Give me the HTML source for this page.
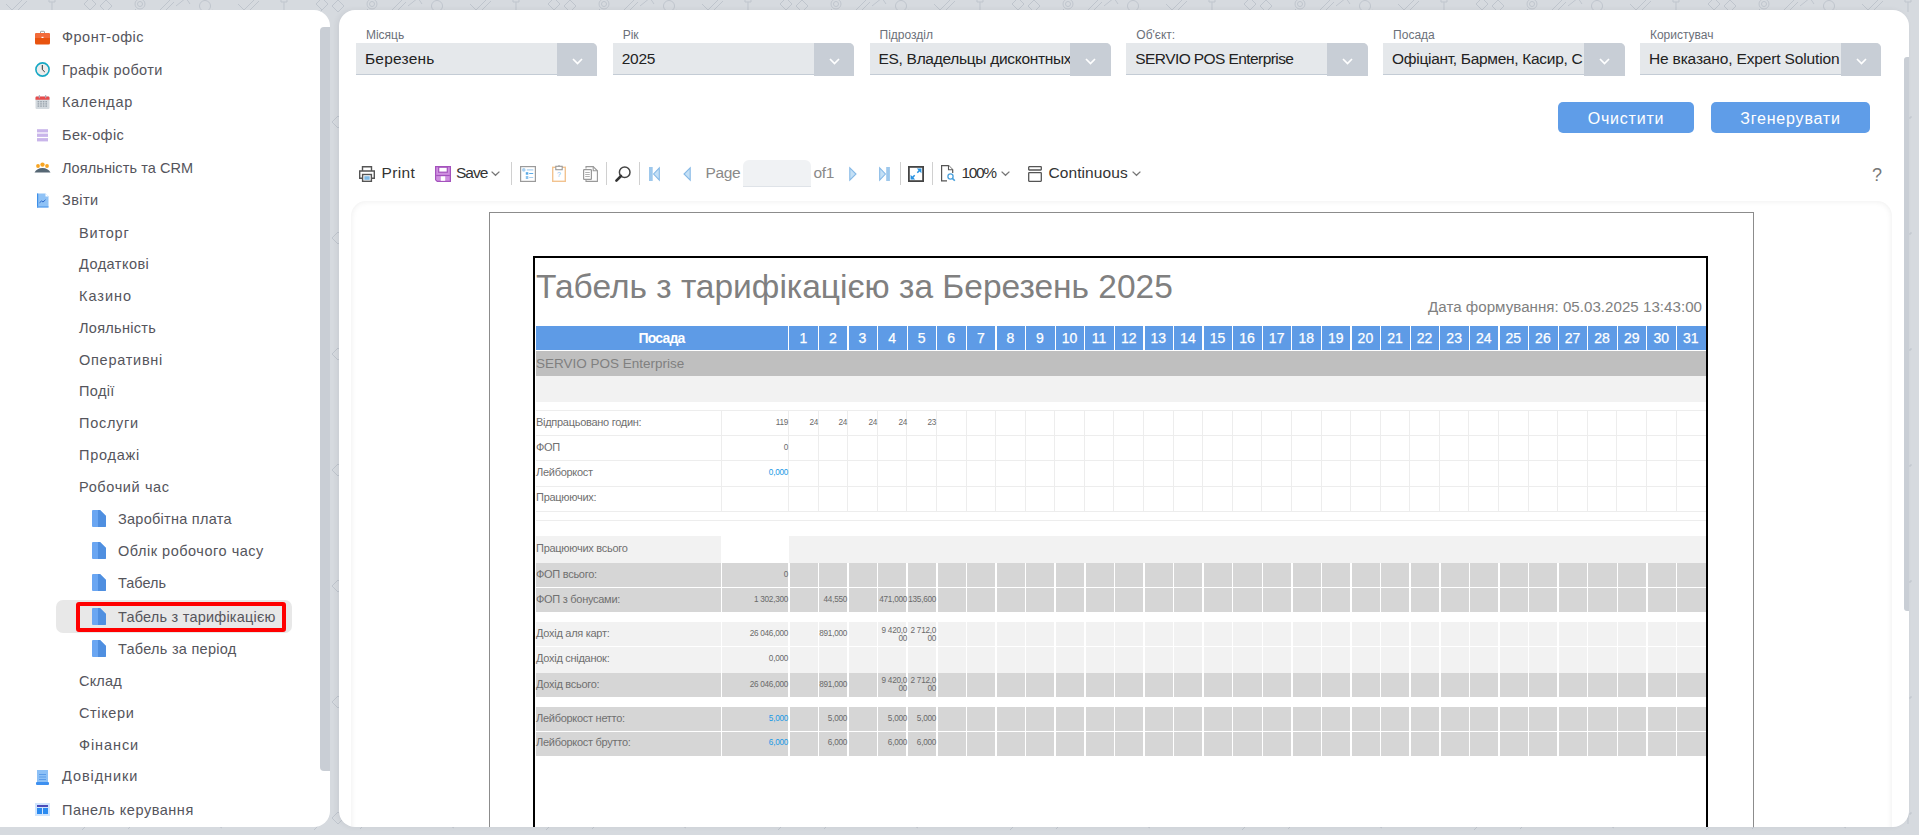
<!DOCTYPE html><html><head><meta charset="utf-8"><style>

*{box-sizing:border-box;margin:0;padding:0}
html,body{width:1919px;height:835px;overflow:hidden}
body{background:#d6dadf;font-family:"Liberation Sans",sans-serif;position:relative;color:#333}
.abs{position:absolute}
svg{position:absolute;overflow:visible}
#side{position:absolute;left:0;top:10px;width:330px;height:817px;background:#fff;border-radius:0 16px 16px 0}
#sbar{position:absolute;left:320px;top:27px;width:10px;height:744px;background:#c9ced5;border-radius:4px 0 0 4px}
.mi{position:absolute;white-space:nowrap;font-size:14.5px;letter-spacing:0.45px;line-height:20px;color:#55555c}
#main{position:absolute;left:339px;top:10px;width:1570px;height:817px;background:#fff;border-radius:16px;box-shadow:-2px 0 5px rgba(60,70,80,0.08)}
#mbar{position:absolute;left:1904px;top:57px;width:5px;height:554px;background:#c9ced5;border-radius:3px 0 0 3px}
.lbl{position:absolute;font-size:12px;color:#6b7079;line-height:14px;white-space:nowrap}
.dd{position:absolute;top:43px;width:241.5px;height:32px;background:#e5e8eb;border-bottom:1px solid #c4ccd5;border-radius:0 5px 0 0}
.dd .v{position:absolute;left:9px;top:6.3px;font-size:15.5px;line-height:20px;color:#222;white-space:nowrap;overflow:hidden}
.dd .ar{position:absolute;right:0;top:0;width:40.7px;height:32.7px;background:#c8ced6;border-radius:0 5px 0 0}
.btn{position:absolute;top:102px;height:31px;background:#5f9de8;border-radius:5px;color:#fff;font-size:16px;line-height:33px;text-align:center;letter-spacing:0.8px}
.tb{position:absolute;font-size:15.5px;line-height:20px;color:#333;white-space:nowrap}
.sep{position:absolute;top:162px;width:1px;height:23px;background:#d0d0d0}

</style></head><body>
<svg style="left:0;top:0" width="1919" height="835"><defs><pattern id="dd" x="0" y="0" width="232" height="116" patternUnits="userSpaceOnUse"><g fill="none" stroke="#bfc5cd" stroke-width="1"><path d="M14 8L24 -2M17 11L27 1M10 12L14 8M6 4L12 10"/><path d="M52 12V2M49 -1A3 3 0 0 1 55 -1L55 2H49Z"/><path d="M84 4L90 -2L96 4L90 10ZM90 10L82 18M100 6L106 0L112 6L106 12Z"/><circle cx="140" cy="4" r="5"/><circle cx="140" cy="4" r="2.5"/><path d="M136 9L128 17"/><path d="M160 10L170 0M164 12L174 2M176 6L186 -2L190 4"/><circle cx="205" cy="6" r="5.5"/><path d="M212 10L222 16"/><path d="M30 62L40 52M34 66L44 56M26 70L30 66"/><circle cx="80" cy="62" r="5"/><path d="M118 56L124 50L130 56L124 62Z M150 66V56"/><path d="M190 60L204 60M196 54L204 68"/></g></pattern></defs><rect width="1919" height="835" fill="url(#dd)"/></svg>
<div id="side"></div>
<div id="sbar"></div>
<div class="abs" style="left:56px;top:600px;width:236px;height:33px;background:#e8e8e8;border-radius:7px"></div>
<div class="abs" style="left:76px;top:602px;width:210px;height:30px;border:4px solid #f00;border-radius:3px"></div>
<div class="mi" style="left:62px;top:27px;letter-spacing:0.5px">Фронт-офіс</div>
<div class="mi" style="left:62px;top:60px;letter-spacing:0.4px">Графік роботи</div>
<div class="mi" style="left:62px;top:92px;letter-spacing:0.66px">Календар</div>
<div class="mi" style="left:62px;top:125px;letter-spacing:0.36px">Бек-офіс</div>
<div class="mi" style="left:62px;top:158px;letter-spacing:0.09px">Лояльність та CRM</div>
<div class="mi" style="left:62px;top:190px;letter-spacing:0.43px">Звіти</div>
<div class="mi" style="left:79px;top:223px;letter-spacing:0.82px">Виторг</div>
<div class="mi" style="left:79px;top:254px;letter-spacing:0.47px">Додаткові</div>
<div class="mi" style="left:79px;top:286px;letter-spacing:1.0px">Казино</div>
<div class="mi" style="left:79px;top:318px;letter-spacing:0.3px">Лояльність</div>
<div class="mi" style="left:79px;top:350px;letter-spacing:0.74px">Оперативні</div>
<div class="mi" style="left:79px;top:381px;letter-spacing:0.38px">Події</div>
<div class="mi" style="left:79px;top:413px;letter-spacing:0.72px">Послуги</div>
<div class="mi" style="left:79px;top:445px;letter-spacing:0.75px">Продажі</div>
<div class="mi" style="left:79px;top:477px;letter-spacing:0.62px">Робочий час</div>
<div class="mi" style="left:118px;top:509px;letter-spacing:0.26px">Заробітна плата</div>
<svg style="left:92px;top:510px" width="14" height="17" viewBox="0 0 14 17"><path d="M0 1Q0 0 1 0H8L14 6V16Q14 17 13 17H1Q0 17 0 16Z" fill="#6aa6f2"/><path d="M6 0H8L14 6V16Q14 17 13 17H6Z" fill="#4f8fe0"/></svg>
<div class="mi" style="left:118px;top:541px;letter-spacing:0.52px">Облік робочого часу</div>
<svg style="left:92px;top:542px" width="14" height="17" viewBox="0 0 14 17"><path d="M0 1Q0 0 1 0H8L14 6V16Q14 17 13 17H1Q0 17 0 16Z" fill="#6aa6f2"/><path d="M6 0H8L14 6V16Q14 17 13 17H6Z" fill="#4f8fe0"/></svg>
<div class="mi" style="left:118px;top:573px;letter-spacing:0.0px">Табель</div>
<svg style="left:92px;top:574px" width="14" height="17" viewBox="0 0 14 17"><path d="M0 1Q0 0 1 0H8L14 6V16Q14 17 13 17H1Q0 17 0 16Z" fill="#6aa6f2"/><path d="M6 0H8L14 6V16Q14 17 13 17H6Z" fill="#4f8fe0"/></svg>
<div class="mi" style="left:118px;top:607px;letter-spacing:0.22px">Табель з тарифікацією</div>
<svg style="left:92px;top:608px" width="14" height="17" viewBox="0 0 14 17"><path d="M0 1Q0 0 1 0H8L14 6V16Q14 17 13 17H1Q0 17 0 16Z" fill="#6aa6f2"/><path d="M6 0H8L14 6V16Q14 17 13 17H6Z" fill="#4f8fe0"/></svg>
<div class="mi" style="left:118px;top:639px;letter-spacing:0.27px">Табель за період</div>
<svg style="left:92px;top:640px" width="14" height="17" viewBox="0 0 14 17"><path d="M0 1Q0 0 1 0H8L14 6V16Q14 17 13 17H1Q0 17 0 16Z" fill="#6aa6f2"/><path d="M6 0H8L14 6V16Q14 17 13 17H6Z" fill="#4f8fe0"/></svg>
<div class="mi" style="left:79px;top:671px;letter-spacing:0.18px">Склад</div>
<div class="mi" style="left:79px;top:703px;letter-spacing:0.63px">Стікери</div>
<div class="mi" style="left:79px;top:735px;letter-spacing:0.92px">Фінанси</div>
<div class="mi" style="left:62px;top:766px;letter-spacing:0.93px">Довідники</div>
<div class="mi" style="left:62px;top:800px;letter-spacing:0.53px">Панель керування</div>
<svg style="left:35px;top:31px" width="15" height="14" viewBox="0 0 15 14"><path d="M5.5 2V1Q5.5 0.3 6.2 0.3H8.8Q9.5 0.3 9.5 1V2" stroke="#888" stroke-width="0.8" fill="none"/><rect x="0" y="2" width="15" height="11.5" rx="1.5" fill="#e8530f"/><path d="M0 3.5Q0 2 1.5 2H13.5Q15 2 15 3.5V7H0Z" fill="#f26b3a"/><rect x="6.5" y="5.8" width="2" height="1.2" fill="#fff"/></svg>
<svg style="left:35px;top:62px" width="15" height="15" viewBox="0 0 15 15"><circle cx="7.5" cy="7.5" r="6.6" fill="#ececec" stroke="#17a8c4" stroke-width="1.6"/><path d="M7.3 3V7.6L9.8 10" stroke="#333" stroke-width="1" fill="none"/></svg>
<svg style="left:35px;top:95px" width="15" height="14" viewBox="0 0 15 14"><rect x="0.5" y="1.5" width="14" height="12.5" rx="1.2" fill="#d3d9de"/><path d="M0.5 2.7Q0.5 1.5 1.7 1.5H13.3Q14.5 1.5 14.5 2.7V4.8H0.5Z" fill="#e94b4b"/><rect x="3.8" y="0" width="1.1" height="3.2" fill="#aab"/><rect x="10.1" y="0" width="1.1" height="3.2" fill="#aab"/><g fill="#9aa4ad"><rect x="2.6" y="6.0" width="1.6" height="1.4"/><rect x="2.6" y="8.2" width="1.6" height="1.4"/><rect x="2.6" y="10.4" width="1.6" height="1.4"/><rect x="5.2" y="6.0" width="1.6" height="1.4"/><rect x="5.2" y="8.2" width="1.6" height="1.4"/><rect x="5.2" y="10.4" width="1.6" height="1.4"/><rect x="7.8" y="6.0" width="1.6" height="1.4"/><rect x="7.8" y="8.2" width="1.6" height="1.4"/><rect x="7.8" y="10.4" width="1.6" height="1.4"/><rect x="10.4" y="6.0" width="1.6" height="1.4"/><rect x="10.4" y="8.2" width="1.6" height="1.4"/><rect x="10.4" y="10.4" width="1.6" height="1.4"/></g></svg>
<svg style="left:37px;top:129px" width="11" height="13" viewBox="0 0 11 13"><g fill="#c9b5ea"><rect x="0" y="0.2" width="11" height="3.2"/><rect x="0" y="4.6" width="11" height="3.3"/><rect x="0" y="9.1" width="11" height="3.3"/></g></svg>
<svg style="left:34px;top:162px" width="17" height="11" viewBox="0 0 17 11"><path d="M0.5 10.5Q3 6 8.5 6Q14 6 16.5 10.5Z" fill="#566774"/><circle cx="4" cy="4" r="1.9" fill="#f8a523"/><circle cx="13" cy="4" r="1.9" fill="#f8a523"/><circle cx="8.5" cy="2.6" r="2.2" fill="#f8a523"/></svg>
<svg style="left:36px;top:193px" width="13" height="15" viewBox="0 0 13 15"><path d="M1 0.5H9.5L12.5 3.5V14.5H1Z" fill="#8fc2f6"/><path d="M1 0.5H2.2V14.5H1Z" fill="#3d8fe8"/><path d="M1 14.5H12.5V13.3H1Z" fill="#5aa0ee"/><path d="M9.5 0.5V3.5H12.5Z" fill="#fff"/><path d="M3.5 9.8L5.5 8L7 9L9.5 6.8" stroke="#2a66c8" stroke-width="1" fill="none"/></svg>
<svg style="left:36px;top:770px" width="13" height="15" viewBox="0 0 13 15"><rect x="1" y="0" width="11" height="12.5" fill="#8cc0f6"/><g fill="#5a9be8"><rect x="3" y="4" width="7" height="1"/><rect x="3" y="6.5" width="7" height="1"/><rect x="3" y="9" width="7" height="1"/></g><rect x="0" y="12" width="13" height="3" rx="1" fill="#3d90f0"/></svg>
<svg style="left:35px;top:803px" width="15" height="13" viewBox="0 0 15 13"><rect x="0" y="0" width="15" height="13" fill="#cfe4fd"/><rect x="2" y="2" width="11" height="2" fill="#4a4ab8"/><rect x="2" y="5" width="5" height="6" fill="#2a8af0"/><rect x="8" y="5" width="5" height="6" fill="#2a8af0"/></svg>
<div id="main"></div>
<div id="mbar"></div>
<div class="lbl" style="left:365.9px;top:28px">Місяць</div>
<div class="dd" style="left:355.9px"><div class="v" style="width:191px;letter-spacing:0.23px">Березень</div><div class="ar"><svg style="left:15px;top:15px" width="11" height="7" viewBox="0 0 11 7"><path d="M1 1L5.5 5.5L10 1" stroke="#fff" stroke-width="1.7" fill="none"/></svg></div></div>
<div class="lbl" style="left:622.7px;top:28px">Рік</div>
<div class="dd" style="left:612.7px"><div class="v" style="width:191px;letter-spacing:-0.23px">2025</div><div class="ar"><svg style="left:15px;top:15px" width="11" height="7" viewBox="0 0 11 7"><path d="M1 1L5.5 5.5L10 1" stroke="#fff" stroke-width="1.7" fill="none"/></svg></div></div>
<div class="lbl" style="left:879.5px;top:28px">Підрозділ</div>
<div class="dd" style="left:869.5px"><div class="v" style="width:191px;letter-spacing:-0.3px">ES, Владельцы дисконтных</div><div class="ar"><svg style="left:15px;top:15px" width="11" height="7" viewBox="0 0 11 7"><path d="M1 1L5.5 5.5L10 1" stroke="#fff" stroke-width="1.7" fill="none"/></svg></div></div>
<div class="lbl" style="left:1136.3px;top:28px">Об'єкт:</div>
<div class="dd" style="left:1126.3px"><div class="v" style="width:191px;letter-spacing:-0.58px">SERVIO POS Enterprise</div><div class="ar"><svg style="left:15px;top:15px" width="11" height="7" viewBox="0 0 11 7"><path d="M1 1L5.5 5.5L10 1" stroke="#fff" stroke-width="1.7" fill="none"/></svg></div></div>
<div class="lbl" style="left:1393.1px;top:28px">Посада</div>
<div class="dd" style="left:1383.1px"><div class="v" style="width:191px;letter-spacing:-0.3px">Офіціант, Бармен, Касир, Сі</div><div class="ar"><svg style="left:15px;top:15px" width="11" height="7" viewBox="0 0 11 7"><path d="M1 1L5.5 5.5L10 1" stroke="#fff" stroke-width="1.7" fill="none"/></svg></div></div>
<div class="lbl" style="left:1649.9px;top:28px">Користувач</div>
<div class="dd" style="left:1639.9px"><div class="v" style="width:191px;letter-spacing:-0.15px">Не вказано, Expert Solution</div><div class="ar"><svg style="left:15px;top:15px" width="11" height="7" viewBox="0 0 11 7"><path d="M1 1L5.5 5.5L10 1" stroke="#fff" stroke-width="1.7" fill="none"/></svg></div></div>
<div class="btn" style="left:1558px;width:136px">Очистити</div>
<div class="btn" style="left:1711px;width:159px">Згенерувати</div>
<div class="tb" style="left:381.5px;top:163.2px;letter-spacing:0.33px">Print</div>
<div class="tb" style="left:456px;top:163.2px;letter-spacing:-1.0px">Save</div>
<div class="tb" style="left:705.5px;top:163.2px;color:#8a8a8a;letter-spacing:-0.37px">Page</div>
<div class="abs" style="left:743px;top:160px;width:68px;height:27px;background:#f0f2f4;border-bottom:1px solid #dfe3e8;border-radius:6px 6px 0 0"></div>
<div class="tb" style="left:813.5px;top:163.2px;color:#8a8a8a;letter-spacing:-0.4px">of1</div>
<div class="tb" style="left:961.5px;top:163.2px;letter-spacing:-1.33px">100%</div>
<div class="tb" style="left:1048.5px;top:163.2px;letter-spacing:0.08px">Continuous</div>
<div class="tb" style="left:1872px;top:164px;color:#777;font-size:18px;line-height:22px">?</div>
<div class="sep" style="left:511px"></div>
<div class="sep" style="left:606px"></div>
<div class="sep" style="left:639px"></div>
<div class="sep" style="left:900px"></div>
<div class="sep" style="left:932px"></div>
<svg style="left:491px;top:171px" width="9" height="5" viewBox="0 0 9 5"><path d="M0.6 0.6L4.5 4.3L8.4 0.6" stroke="#777" stroke-width="1.3" fill="none"/></svg>
<svg style="left:1001px;top:171px" width="9" height="5" viewBox="0 0 9 5"><path d="M0.6 0.6L4.5 4.3L8.4 0.6" stroke="#777" stroke-width="1.3" fill="none"/></svg>
<svg style="left:1132px;top:171px" width="9" height="5" viewBox="0 0 9 5"><path d="M0.6 0.6L4.5 4.3L8.4 0.6" stroke="#777" stroke-width="1.3" fill="none"/></svg>
<svg style="left:359px;top:166px" width="16" height="16" viewBox="0 0 16 16"><path d="M3.5 5V0.7H12.5V5" stroke="#555" stroke-width="1.4" fill="none"/><path d="M3 12.3H0.7V5H15.3V12.3H13" stroke="#555" stroke-width="1.4" fill="none"/><rect x="3.6" y="8.5" width="8.8" height="6.8" fill="#fff" stroke="#555" stroke-width="1.4"/><rect x="5.3" y="10.2" width="5.4" height="3.6" fill="#7fbbe8"/></svg>
<svg style="left:435px;top:166px" width="16" height="16" viewBox="0 0 16 16"><path d="M0 0H16V16H2L0 14Z" fill="#a452bd"/><path d="M1.2 1.2H14.8V14.8H2.4L1.2 13.6Z" fill="#cf8fe0"/><rect x="3.7" y="1.2" width="8.6" height="5" fill="#fff" stroke="#a452bd" stroke-width="1.2"/><rect x="5.8" y="10.2" width="4.4" height="4.6" fill="#fff"/><path d="M1.2 9.5H14.8" stroke="#a452bd" stroke-width="1.2"/></svg>
<svg style="left:520px;top:166px" width="16" height="16" viewBox="0 0 16 16"><rect x="0.6" y="0.6" width="14.8" height="14.8" fill="#fff" stroke="#9a9a9a" stroke-width="1.2"/><circle cx="3.8" cy="3.9" r="1.8" fill="#a9d0f0"/><rect x="6.8" y="3.3" width="6.5" height="1.2" fill="#a9d0f0"/><rect x="5.8" y="6.2" width="2.5" height="2.5" fill="#5aaae6"/><rect x="9.2" y="7" width="4" height="1" fill="#5aaae6"/><rect x="5.8" y="10" width="2.5" height="3" fill="#8cc4ee"/><rect x="9.2" y="11" width="4" height="1" fill="#a9d0f0"/></svg>
<svg style="left:552px;top:165px" width="14" height="17" viewBox="0 0 14 17"><rect x="0.7" y="2.3" width="12.6" height="14" fill="#fff" stroke="#f2c390" stroke-width="1.4"/><rect x="3.8" y="1.3" width="6.4" height="3.4" fill="#fff" stroke="#999" stroke-width="1.1"/><circle cx="7" cy="0.7" r="0.7" fill="#999"/><text x="7" y="12" font-size="7" text-anchor="middle" fill="#7ab8ec" font-family="Liberation Sans">?</text></svg>
<svg style="left:583px;top:166px" width="15" height="16" viewBox="0 0 15 16"><path d="M3 2.5V0.6H10.2L14.4 4.8V15.4H3V13" stroke="#999" stroke-width="1.1" fill="#fff"/><path d="M10.2 0.6V4.8H14.4" stroke="#999" stroke-width="1.1" fill="none"/><rect x="0.6" y="3.6" width="7.8" height="9.8" rx="0.6" fill="#fff" stroke="#999" stroke-width="1.2"/><g fill="#aaa"><rect x="2.2" y="6" width="4.6" height="0.9"/><rect x="2.2" y="8" width="4.6" height="0.9"/><rect x="2.2" y="10" width="4.6" height="0.9"/></g></svg>
<svg style="left:615px;top:166px" width="16" height="16" viewBox="0 0 16 16"><circle cx="9.7" cy="6.2" r="5.3" fill="none" stroke="#444" stroke-width="1.5"/><path d="M6 10L1.4 14.6" stroke="#333" stroke-width="2.6" stroke-linecap="round"/></svg>
<svg style="left:649px;top:167px" width="11" height="14" viewBox="0 0 11 14"><rect x="0" y="0" width="3.7" height="14" fill="#9ec8ec"/><path d="M10.3 0.8V13.2L4.6 7Z" fill="#c4e0f6" stroke="#86b9e6" stroke-width="1.1"/></svg>
<svg style="left:683px;top:167px" width="8" height="14" viewBox="0 0 8 14"><path d="M7.2 0.8V13.2L1 7Z" fill="#c4e0f6" stroke="#86b9e6" stroke-width="1.1"/></svg>
<svg style="left:849px;top:167px" width="8" height="14" viewBox="0 0 8 14"><path d="M0.8 0.8V13.2L7 7Z" fill="#c4e0f6" stroke="#86b9e6" stroke-width="1.1"/></svg>
<svg style="left:879px;top:167px" width="11" height="14" viewBox="0 0 11 14"><path d="M0.7 0.8V13.2L6.4 7Z" fill="#c4e0f6" stroke="#86b9e6" stroke-width="1.1"/><rect x="7.2" y="0" width="3.7" height="14" fill="#9ec8ec"/></svg>
<svg style="left:908px;top:166px" width="16" height="16" viewBox="0 0 16 16"><rect x="0.9" y="0.9" width="14.2" height="14.2" fill="#fff" stroke="#444" stroke-width="1.8"/><path d="M9.3 6.7L11.6 4.4M6.7 9.3L4.4 11.6" stroke="#2a93e2" stroke-width="1.5"/><path d="M13.4 2.6V7.2L8.8 2.6Z M2.6 13.4V8.8L7.2 13.4Z" fill="#2a93e2"/></svg>
<svg style="left:941px;top:165px" width="15" height="17" viewBox="0 0 15 17"><path d="M6 15.8H0.6V0.6H7.5L11.7 4.8V8" stroke="#555" stroke-width="1.2" fill="none"/><path d="M7.5 0.6V4.8H11.7" stroke="#555" stroke-width="1.1" fill="#fff"/><circle cx="9.5" cy="11.5" r="2.6" fill="#fff" stroke="#4aa0dc" stroke-width="1.3"/><path d="M11.4 13.4L13.8 15.8" stroke="#4aa0dc" stroke-width="1.6"/></svg>
<svg style="left:1028px;top:166px" width="14" height="16" viewBox="0 0 14 16"><rect x="0.7" y="0.7" width="12.6" height="3.3" rx="0.5" fill="none" stroke="#555" stroke-width="1.3"/><rect x="0.7" y="6.7" width="12.6" height="8.6" rx="0.5" fill="none" stroke="#555" stroke-width="1.3"/></svg>
<div class="abs" style="left:339px;top:10px;width:1571px;height:817px;border-radius:16px;overflow:hidden"><div class="abs" style="left:-339px;top:-10px;width:1919px;height:835px">
<div class="abs" style="left:351px;top:201px;width:1541px;height:660px;border-radius:15px;box-shadow:inset 0 0 6px rgba(0,0,0,0.08)"></div>
<div class="abs" style="left:489px;top:212px;width:1265px;height:640px;background:#fff;border:1px solid #8c8c8c"></div>
<div class="abs" style="left:533px;top:256px;width:1175px;height:600px;border:2px solid #000;border-bottom:none"></div>
<div class="abs" style="left:536px;top:266.5px;font-size:33.5px;line-height:40px;color:#808080;white-space:nowrap">Табель з тарифікацією за Березень 2025</div>
<div class="abs" style="right:217px;top:297px;font-size:15.1px;letter-spacing:0.03px;line-height:20px;color:#808080;white-space:nowrap">Дата формування: 05.03.2025 13:43:00</div>
<div class="abs" style="left:536.00px;top:326.00px;width:1169.70px;height:24.00px;background:#5e9be6;"></div>
<div class="abs" style="left:788.20px;top:326.00px;width:1.20px;height:24.00px;background:#fff;"></div>
<div class="abs" style="left:817.88px;top:326.00px;width:1.20px;height:24.00px;background:#fff;"></div>
<div class="abs" style="left:847.47px;top:326.00px;width:1.20px;height:24.00px;background:#fff;"></div>
<div class="abs" style="left:877.05px;top:326.00px;width:1.20px;height:24.00px;background:#fff;"></div>
<div class="abs" style="left:906.64px;top:326.00px;width:1.20px;height:24.00px;background:#fff;"></div>
<div class="abs" style="left:936.22px;top:326.00px;width:1.20px;height:24.00px;background:#fff;"></div>
<div class="abs" style="left:965.81px;top:326.00px;width:1.20px;height:24.00px;background:#fff;"></div>
<div class="abs" style="left:995.39px;top:326.00px;width:1.20px;height:24.00px;background:#fff;"></div>
<div class="abs" style="left:1024.98px;top:326.00px;width:1.20px;height:24.00px;background:#fff;"></div>
<div class="abs" style="left:1054.56px;top:326.00px;width:1.20px;height:24.00px;background:#fff;"></div>
<div class="abs" style="left:1084.15px;top:326.00px;width:1.20px;height:24.00px;background:#fff;"></div>
<div class="abs" style="left:1113.73px;top:326.00px;width:1.20px;height:24.00px;background:#fff;"></div>
<div class="abs" style="left:1143.32px;top:326.00px;width:1.20px;height:24.00px;background:#fff;"></div>
<div class="abs" style="left:1172.90px;top:326.00px;width:1.20px;height:24.00px;background:#fff;"></div>
<div class="abs" style="left:1202.49px;top:326.00px;width:1.20px;height:24.00px;background:#fff;"></div>
<div class="abs" style="left:1232.08px;top:326.00px;width:1.20px;height:24.00px;background:#fff;"></div>
<div class="abs" style="left:1261.66px;top:326.00px;width:1.20px;height:24.00px;background:#fff;"></div>
<div class="abs" style="left:1291.24px;top:326.00px;width:1.20px;height:24.00px;background:#fff;"></div>
<div class="abs" style="left:1320.83px;top:326.00px;width:1.20px;height:24.00px;background:#fff;"></div>
<div class="abs" style="left:1350.41px;top:326.00px;width:1.20px;height:24.00px;background:#fff;"></div>
<div class="abs" style="left:1380.00px;top:326.00px;width:1.20px;height:24.00px;background:#fff;"></div>
<div class="abs" style="left:1409.58px;top:326.00px;width:1.20px;height:24.00px;background:#fff;"></div>
<div class="abs" style="left:1439.17px;top:326.00px;width:1.20px;height:24.00px;background:#fff;"></div>
<div class="abs" style="left:1468.75px;top:326.00px;width:1.20px;height:24.00px;background:#fff;"></div>
<div class="abs" style="left:1498.34px;top:326.00px;width:1.20px;height:24.00px;background:#fff;"></div>
<div class="abs" style="left:1527.92px;top:326.00px;width:1.20px;height:24.00px;background:#fff;"></div>
<div class="abs" style="left:1557.51px;top:326.00px;width:1.20px;height:24.00px;background:#fff;"></div>
<div class="abs" style="left:1587.10px;top:326.00px;width:1.20px;height:24.00px;background:#fff;"></div>
<div class="abs" style="left:1616.68px;top:326.00px;width:1.20px;height:24.00px;background:#fff;"></div>
<div class="abs" style="left:1646.27px;top:326.00px;width:1.20px;height:24.00px;background:#fff;"></div>
<div class="abs" style="left:1675.85px;top:326.00px;width:1.20px;height:24.00px;background:#fff;"></div>
<div class="abs" style="left:535px;top:326px;width:253px;height:24px;line-height:24px;text-align:center;color:#fff;font-weight:bold;font-size:14px;letter-spacing:-0.8px">Посада</div>
<div class="abs" style="left:788.50px;top:326px;width:29.59px;height:24px;line-height:24px;text-align:center;color:#fff;font-size:14px;-webkit-text-stroke:0.25px #fff">1</div>
<div class="abs" style="left:818.09px;top:326px;width:29.59px;height:24px;line-height:24px;text-align:center;color:#fff;font-size:14px;-webkit-text-stroke:0.25px #fff">2</div>
<div class="abs" style="left:847.67px;top:326px;width:29.59px;height:24px;line-height:24px;text-align:center;color:#fff;font-size:14px;-webkit-text-stroke:0.25px #fff">3</div>
<div class="abs" style="left:877.25px;top:326px;width:29.59px;height:24px;line-height:24px;text-align:center;color:#fff;font-size:14px;-webkit-text-stroke:0.25px #fff">4</div>
<div class="abs" style="left:906.84px;top:326px;width:29.59px;height:24px;line-height:24px;text-align:center;color:#fff;font-size:14px;-webkit-text-stroke:0.25px #fff">5</div>
<div class="abs" style="left:936.42px;top:326px;width:29.59px;height:24px;line-height:24px;text-align:center;color:#fff;font-size:14px;-webkit-text-stroke:0.25px #fff">6</div>
<div class="abs" style="left:966.01px;top:326px;width:29.59px;height:24px;line-height:24px;text-align:center;color:#fff;font-size:14px;-webkit-text-stroke:0.25px #fff">7</div>
<div class="abs" style="left:995.60px;top:326px;width:29.59px;height:24px;line-height:24px;text-align:center;color:#fff;font-size:14px;-webkit-text-stroke:0.25px #fff">8</div>
<div class="abs" style="left:1025.18px;top:326px;width:29.59px;height:24px;line-height:24px;text-align:center;color:#fff;font-size:14px;-webkit-text-stroke:0.25px #fff">9</div>
<div class="abs" style="left:1054.76px;top:326px;width:29.59px;height:24px;line-height:24px;text-align:center;color:#fff;font-size:14px;-webkit-text-stroke:0.25px #fff">10</div>
<div class="abs" style="left:1084.35px;top:326px;width:29.59px;height:24px;line-height:24px;text-align:center;color:#fff;font-size:14px;-webkit-text-stroke:0.25px #fff">11</div>
<div class="abs" style="left:1113.93px;top:326px;width:29.59px;height:24px;line-height:24px;text-align:center;color:#fff;font-size:14px;-webkit-text-stroke:0.25px #fff">12</div>
<div class="abs" style="left:1143.52px;top:326px;width:29.59px;height:24px;line-height:24px;text-align:center;color:#fff;font-size:14px;-webkit-text-stroke:0.25px #fff">13</div>
<div class="abs" style="left:1173.11px;top:326px;width:29.59px;height:24px;line-height:24px;text-align:center;color:#fff;font-size:14px;-webkit-text-stroke:0.25px #fff">14</div>
<div class="abs" style="left:1202.69px;top:326px;width:29.59px;height:24px;line-height:24px;text-align:center;color:#fff;font-size:14px;-webkit-text-stroke:0.25px #fff">15</div>
<div class="abs" style="left:1232.28px;top:326px;width:29.59px;height:24px;line-height:24px;text-align:center;color:#fff;font-size:14px;-webkit-text-stroke:0.25px #fff">16</div>
<div class="abs" style="left:1261.86px;top:326px;width:29.59px;height:24px;line-height:24px;text-align:center;color:#fff;font-size:14px;-webkit-text-stroke:0.25px #fff">17</div>
<div class="abs" style="left:1291.44px;top:326px;width:29.59px;height:24px;line-height:24px;text-align:center;color:#fff;font-size:14px;-webkit-text-stroke:0.25px #fff">18</div>
<div class="abs" style="left:1321.03px;top:326px;width:29.59px;height:24px;line-height:24px;text-align:center;color:#fff;font-size:14px;-webkit-text-stroke:0.25px #fff">19</div>
<div class="abs" style="left:1350.62px;top:326px;width:29.59px;height:24px;line-height:24px;text-align:center;color:#fff;font-size:14px;-webkit-text-stroke:0.25px #fff">20</div>
<div class="abs" style="left:1380.20px;top:326px;width:29.59px;height:24px;line-height:24px;text-align:center;color:#fff;font-size:14px;-webkit-text-stroke:0.25px #fff">21</div>
<div class="abs" style="left:1409.78px;top:326px;width:29.59px;height:24px;line-height:24px;text-align:center;color:#fff;font-size:14px;-webkit-text-stroke:0.25px #fff">22</div>
<div class="abs" style="left:1439.37px;top:326px;width:29.59px;height:24px;line-height:24px;text-align:center;color:#fff;font-size:14px;-webkit-text-stroke:0.25px #fff">23</div>
<div class="abs" style="left:1468.95px;top:326px;width:29.59px;height:24px;line-height:24px;text-align:center;color:#fff;font-size:14px;-webkit-text-stroke:0.25px #fff">24</div>
<div class="abs" style="left:1498.54px;top:326px;width:29.59px;height:24px;line-height:24px;text-align:center;color:#fff;font-size:14px;-webkit-text-stroke:0.25px #fff">25</div>
<div class="abs" style="left:1528.12px;top:326px;width:29.59px;height:24px;line-height:24px;text-align:center;color:#fff;font-size:14px;-webkit-text-stroke:0.25px #fff">26</div>
<div class="abs" style="left:1557.71px;top:326px;width:29.59px;height:24px;line-height:24px;text-align:center;color:#fff;font-size:14px;-webkit-text-stroke:0.25px #fff">27</div>
<div class="abs" style="left:1587.30px;top:326px;width:29.59px;height:24px;line-height:24px;text-align:center;color:#fff;font-size:14px;-webkit-text-stroke:0.25px #fff">28</div>
<div class="abs" style="left:1616.88px;top:326px;width:29.59px;height:24px;line-height:24px;text-align:center;color:#fff;font-size:14px;-webkit-text-stroke:0.25px #fff">29</div>
<div class="abs" style="left:1646.47px;top:326px;width:29.59px;height:24px;line-height:24px;text-align:center;color:#fff;font-size:14px;-webkit-text-stroke:0.25px #fff">30</div>
<div class="abs" style="left:1676.05px;top:326px;width:29.59px;height:24px;line-height:24px;text-align:center;color:#fff;font-size:14px;-webkit-text-stroke:0.25px #fff">31</div>
<div class="abs" style="left:536.00px;top:350.50px;width:1169.70px;height:25.50px;background:#bfbfbf;"></div>
<div class="abs" style="left:536px;top:351px;height:25px;line-height:25px;color:#808080;font-size:13.5px;white-space:nowrap">SERVIO POS Enterprise</div>
<div class="abs" style="left:536.00px;top:376.00px;width:1169.70px;height:26.00px;background:#f2f2f2;"></div>
<div class="abs" style="left:536.00px;top:410.00px;width:1169.70px;height:1.00px;background:#ededed;"></div>
<div class="abs" style="left:536.00px;top:435.00px;width:1169.70px;height:1.00px;background:#ededed;"></div>
<div class="abs" style="left:536.00px;top:460.00px;width:1169.70px;height:1.00px;background:#ededed;"></div>
<div class="abs" style="left:536.00px;top:485.50px;width:1169.70px;height:1.00px;background:#ededed;"></div>
<div class="abs" style="left:536.00px;top:510.50px;width:1169.70px;height:1.00px;background:#ededed;"></div>
<div class="abs" style="left:536.00px;top:520.00px;width:1169.70px;height:1.00px;background:#ededed;"></div>
<div class="abs" style="left:720.50px;top:410.00px;width:1.00px;height:101.00px;background:#ededed;"></div>
<div class="abs" style="left:788.00px;top:410.00px;width:1.00px;height:101.00px;background:#ededed;"></div>
<div class="abs" style="left:817.59px;top:410.00px;width:1.00px;height:101.00px;background:#ededed;"></div>
<div class="abs" style="left:847.17px;top:410.00px;width:1.00px;height:101.00px;background:#ededed;"></div>
<div class="abs" style="left:876.75px;top:410.00px;width:1.00px;height:101.00px;background:#ededed;"></div>
<div class="abs" style="left:906.34px;top:410.00px;width:1.00px;height:101.00px;background:#ededed;"></div>
<div class="abs" style="left:935.92px;top:410.00px;width:1.00px;height:101.00px;background:#ededed;"></div>
<div class="abs" style="left:965.51px;top:410.00px;width:1.00px;height:101.00px;background:#ededed;"></div>
<div class="abs" style="left:995.10px;top:410.00px;width:1.00px;height:101.00px;background:#ededed;"></div>
<div class="abs" style="left:1024.68px;top:410.00px;width:1.00px;height:101.00px;background:#ededed;"></div>
<div class="abs" style="left:1054.26px;top:410.00px;width:1.00px;height:101.00px;background:#ededed;"></div>
<div class="abs" style="left:1083.85px;top:410.00px;width:1.00px;height:101.00px;background:#ededed;"></div>
<div class="abs" style="left:1113.43px;top:410.00px;width:1.00px;height:101.00px;background:#ededed;"></div>
<div class="abs" style="left:1143.02px;top:410.00px;width:1.00px;height:101.00px;background:#ededed;"></div>
<div class="abs" style="left:1172.61px;top:410.00px;width:1.00px;height:101.00px;background:#ededed;"></div>
<div class="abs" style="left:1202.19px;top:410.00px;width:1.00px;height:101.00px;background:#ededed;"></div>
<div class="abs" style="left:1231.78px;top:410.00px;width:1.00px;height:101.00px;background:#ededed;"></div>
<div class="abs" style="left:1261.36px;top:410.00px;width:1.00px;height:101.00px;background:#ededed;"></div>
<div class="abs" style="left:1290.94px;top:410.00px;width:1.00px;height:101.00px;background:#ededed;"></div>
<div class="abs" style="left:1320.53px;top:410.00px;width:1.00px;height:101.00px;background:#ededed;"></div>
<div class="abs" style="left:1350.12px;top:410.00px;width:1.00px;height:101.00px;background:#ededed;"></div>
<div class="abs" style="left:1379.70px;top:410.00px;width:1.00px;height:101.00px;background:#ededed;"></div>
<div class="abs" style="left:1409.28px;top:410.00px;width:1.00px;height:101.00px;background:#ededed;"></div>
<div class="abs" style="left:1438.87px;top:410.00px;width:1.00px;height:101.00px;background:#ededed;"></div>
<div class="abs" style="left:1468.45px;top:410.00px;width:1.00px;height:101.00px;background:#ededed;"></div>
<div class="abs" style="left:1498.04px;top:410.00px;width:1.00px;height:101.00px;background:#ededed;"></div>
<div class="abs" style="left:1527.62px;top:410.00px;width:1.00px;height:101.00px;background:#ededed;"></div>
<div class="abs" style="left:1557.21px;top:410.00px;width:1.00px;height:101.00px;background:#ededed;"></div>
<div class="abs" style="left:1586.80px;top:410.00px;width:1.00px;height:101.00px;background:#ededed;"></div>
<div class="abs" style="left:1616.38px;top:410.00px;width:1.00px;height:101.00px;background:#ededed;"></div>
<div class="abs" style="left:1645.97px;top:410.00px;width:1.00px;height:101.00px;background:#ededed;"></div>
<div class="abs" style="left:1675.55px;top:410.00px;width:1.00px;height:101.00px;background:#ededed;"></div>
<div style="position:absolute;white-space:nowrap;color:#707070;font-size:11px;letter-spacing:-0.28px;left:536px;top:409.70px;height:25.00px;line-height:25.00px">Відпрацьовано годин:</div>
<div style="position:absolute;white-space:nowrap;color:#707070;font-size:11px;letter-spacing:-0.28px;left:536px;top:434.70px;height:25.00px;line-height:25.00px">ФОП</div>
<div style="position:absolute;white-space:nowrap;color:#707070;font-size:11px;letter-spacing:-0.28px;left:536px;top:459.70px;height:25.50px;line-height:25.50px">Лейборкост</div>
<div style="position:absolute;white-space:nowrap;color:#707070;font-size:11px;letter-spacing:-0.28px;left:536px;top:485.20px;height:25.00px;line-height:25.00px">Працюючих:</div>
<div style="position:absolute;white-space:nowrap;color:#6a6a6a;font-size:9px;letter-spacing:-0.3px;transform:scaleX(0.91);transform-origin:100% 50%;text-align:right;left:708.20px;width:80px;top:409.50px;height:25.00px;line-height:25.00px">119</div>
<div style="position:absolute;white-space:nowrap;color:#6a6a6a;font-size:9px;letter-spacing:-0.3px;transform:scaleX(0.91);transform-origin:100% 50%;text-align:right;left:737.79px;width:80px;top:409.50px;height:25.00px;line-height:25.00px">24</div>
<div style="position:absolute;white-space:nowrap;color:#6a6a6a;font-size:9px;letter-spacing:-0.3px;transform:scaleX(0.91);transform-origin:100% 50%;text-align:right;left:767.37px;width:80px;top:409.50px;height:25.00px;line-height:25.00px">24</div>
<div style="position:absolute;white-space:nowrap;color:#6a6a6a;font-size:9px;letter-spacing:-0.3px;transform:scaleX(0.91);transform-origin:100% 50%;text-align:right;left:796.96px;width:80px;top:409.50px;height:25.00px;line-height:25.00px">24</div>
<div style="position:absolute;white-space:nowrap;color:#6a6a6a;font-size:9px;letter-spacing:-0.3px;transform:scaleX(0.91);transform-origin:100% 50%;text-align:right;left:826.54px;width:80px;top:409.50px;height:25.00px;line-height:25.00px">24</div>
<div style="position:absolute;white-space:nowrap;color:#6a6a6a;font-size:9px;letter-spacing:-0.3px;transform:scaleX(0.91);transform-origin:100% 50%;text-align:right;left:856.12px;width:80px;top:409.50px;height:25.00px;line-height:25.00px">23</div>
<div style="position:absolute;white-space:nowrap;color:#6a6a6a;font-size:9px;letter-spacing:-0.3px;transform:scaleX(0.91);transform-origin:100% 50%;text-align:right;left:708.20px;width:80px;top:434.50px;height:25.00px;line-height:25.00px">0</div>
<div style="position:absolute;white-space:nowrap;color:#6a6a6a;font-size:9px;letter-spacing:-0.3px;transform:scaleX(0.91);transform-origin:100% 50%;text-align:right;color:#1a9ae6;left:708.20px;width:80px;top:459.50px;height:25.50px;line-height:25.50px">0,000</div>
<div class="abs" style="left:536.00px;top:536.00px;width:185.00px;height:26.50px;background:#f2f2f2;"></div>
<div class="abs" style="left:788.50px;top:536.00px;width:917.20px;height:26.50px;background:#f2f2f2;"></div>
<div style="position:absolute;white-space:nowrap;color:#707070;font-size:11px;letter-spacing:-0.28px;left:536px;top:535.20px;height:26.50px;line-height:26.50px">Працюючих всього</div>
<div class="abs" style="left:536.00px;top:562.50px;width:1169.70px;height:25.00px;background:#d6d6d6;"></div>
<div class="abs" style="left:720.65px;top:562.50px;width:1.50px;height:25.00px;background:#fff;"></div>
<div class="abs" style="left:788.15px;top:562.50px;width:1.50px;height:25.00px;background:#fff;"></div>
<div class="abs" style="left:817.74px;top:562.50px;width:1.50px;height:25.00px;background:#fff;"></div>
<div class="abs" style="left:847.32px;top:562.50px;width:1.50px;height:25.00px;background:#fff;"></div>
<div class="abs" style="left:876.90px;top:562.50px;width:1.50px;height:25.00px;background:#fff;"></div>
<div class="abs" style="left:906.49px;top:562.50px;width:1.50px;height:25.00px;background:#fff;"></div>
<div class="abs" style="left:936.07px;top:562.50px;width:1.50px;height:25.00px;background:#fff;"></div>
<div class="abs" style="left:965.66px;top:562.50px;width:1.50px;height:25.00px;background:#fff;"></div>
<div class="abs" style="left:995.25px;top:562.50px;width:1.50px;height:25.00px;background:#fff;"></div>
<div class="abs" style="left:1024.83px;top:562.50px;width:1.50px;height:25.00px;background:#fff;"></div>
<div class="abs" style="left:1054.41px;top:562.50px;width:1.50px;height:25.00px;background:#fff;"></div>
<div class="abs" style="left:1084.00px;top:562.50px;width:1.50px;height:25.00px;background:#fff;"></div>
<div class="abs" style="left:1113.59px;top:562.50px;width:1.50px;height:25.00px;background:#fff;"></div>
<div class="abs" style="left:1143.17px;top:562.50px;width:1.50px;height:25.00px;background:#fff;"></div>
<div class="abs" style="left:1172.76px;top:562.50px;width:1.50px;height:25.00px;background:#fff;"></div>
<div class="abs" style="left:1202.34px;top:562.50px;width:1.50px;height:25.00px;background:#fff;"></div>
<div class="abs" style="left:1231.93px;top:562.50px;width:1.50px;height:25.00px;background:#fff;"></div>
<div class="abs" style="left:1261.51px;top:562.50px;width:1.50px;height:25.00px;background:#fff;"></div>
<div class="abs" style="left:1291.10px;top:562.50px;width:1.50px;height:25.00px;background:#fff;"></div>
<div class="abs" style="left:1320.68px;top:562.50px;width:1.50px;height:25.00px;background:#fff;"></div>
<div class="abs" style="left:1350.27px;top:562.50px;width:1.50px;height:25.00px;background:#fff;"></div>
<div class="abs" style="left:1379.85px;top:562.50px;width:1.50px;height:25.00px;background:#fff;"></div>
<div class="abs" style="left:1409.43px;top:562.50px;width:1.50px;height:25.00px;background:#fff;"></div>
<div class="abs" style="left:1439.02px;top:562.50px;width:1.50px;height:25.00px;background:#fff;"></div>
<div class="abs" style="left:1468.61px;top:562.50px;width:1.50px;height:25.00px;background:#fff;"></div>
<div class="abs" style="left:1498.19px;top:562.50px;width:1.50px;height:25.00px;background:#fff;"></div>
<div class="abs" style="left:1527.78px;top:562.50px;width:1.50px;height:25.00px;background:#fff;"></div>
<div class="abs" style="left:1557.36px;top:562.50px;width:1.50px;height:25.00px;background:#fff;"></div>
<div class="abs" style="left:1586.95px;top:562.50px;width:1.50px;height:25.00px;background:#fff;"></div>
<div class="abs" style="left:1616.53px;top:562.50px;width:1.50px;height:25.00px;background:#fff;"></div>
<div class="abs" style="left:1646.12px;top:562.50px;width:1.50px;height:25.00px;background:#fff;"></div>
<div class="abs" style="left:1675.70px;top:562.50px;width:1.50px;height:25.00px;background:#fff;"></div>
<div class="abs" style="left:536.00px;top:587.50px;width:1169.70px;height:24.50px;background:#d6d6d6;"></div>
<div class="abs" style="left:720.65px;top:587.50px;width:1.50px;height:24.50px;background:#fff;"></div>
<div class="abs" style="left:788.15px;top:587.50px;width:1.50px;height:24.50px;background:#fff;"></div>
<div class="abs" style="left:817.74px;top:587.50px;width:1.50px;height:24.50px;background:#fff;"></div>
<div class="abs" style="left:847.32px;top:587.50px;width:1.50px;height:24.50px;background:#fff;"></div>
<div class="abs" style="left:876.90px;top:587.50px;width:1.50px;height:24.50px;background:#fff;"></div>
<div class="abs" style="left:906.49px;top:587.50px;width:1.50px;height:24.50px;background:#fff;"></div>
<div class="abs" style="left:936.07px;top:587.50px;width:1.50px;height:24.50px;background:#fff;"></div>
<div class="abs" style="left:965.66px;top:587.50px;width:1.50px;height:24.50px;background:#fff;"></div>
<div class="abs" style="left:995.25px;top:587.50px;width:1.50px;height:24.50px;background:#fff;"></div>
<div class="abs" style="left:1024.83px;top:587.50px;width:1.50px;height:24.50px;background:#fff;"></div>
<div class="abs" style="left:1054.41px;top:587.50px;width:1.50px;height:24.50px;background:#fff;"></div>
<div class="abs" style="left:1084.00px;top:587.50px;width:1.50px;height:24.50px;background:#fff;"></div>
<div class="abs" style="left:1113.59px;top:587.50px;width:1.50px;height:24.50px;background:#fff;"></div>
<div class="abs" style="left:1143.17px;top:587.50px;width:1.50px;height:24.50px;background:#fff;"></div>
<div class="abs" style="left:1172.76px;top:587.50px;width:1.50px;height:24.50px;background:#fff;"></div>
<div class="abs" style="left:1202.34px;top:587.50px;width:1.50px;height:24.50px;background:#fff;"></div>
<div class="abs" style="left:1231.93px;top:587.50px;width:1.50px;height:24.50px;background:#fff;"></div>
<div class="abs" style="left:1261.51px;top:587.50px;width:1.50px;height:24.50px;background:#fff;"></div>
<div class="abs" style="left:1291.10px;top:587.50px;width:1.50px;height:24.50px;background:#fff;"></div>
<div class="abs" style="left:1320.68px;top:587.50px;width:1.50px;height:24.50px;background:#fff;"></div>
<div class="abs" style="left:1350.27px;top:587.50px;width:1.50px;height:24.50px;background:#fff;"></div>
<div class="abs" style="left:1379.85px;top:587.50px;width:1.50px;height:24.50px;background:#fff;"></div>
<div class="abs" style="left:1409.43px;top:587.50px;width:1.50px;height:24.50px;background:#fff;"></div>
<div class="abs" style="left:1439.02px;top:587.50px;width:1.50px;height:24.50px;background:#fff;"></div>
<div class="abs" style="left:1468.61px;top:587.50px;width:1.50px;height:24.50px;background:#fff;"></div>
<div class="abs" style="left:1498.19px;top:587.50px;width:1.50px;height:24.50px;background:#fff;"></div>
<div class="abs" style="left:1527.78px;top:587.50px;width:1.50px;height:24.50px;background:#fff;"></div>
<div class="abs" style="left:1557.36px;top:587.50px;width:1.50px;height:24.50px;background:#fff;"></div>
<div class="abs" style="left:1586.95px;top:587.50px;width:1.50px;height:24.50px;background:#fff;"></div>
<div class="abs" style="left:1616.53px;top:587.50px;width:1.50px;height:24.50px;background:#fff;"></div>
<div class="abs" style="left:1646.12px;top:587.50px;width:1.50px;height:24.50px;background:#fff;"></div>
<div class="abs" style="left:1675.70px;top:587.50px;width:1.50px;height:24.50px;background:#fff;"></div>
<div class="abs" style="left:536.00px;top:587.00px;width:1169.70px;height:1.30px;background:#fff;"></div>
<div style="position:absolute;white-space:nowrap;color:#707070;font-size:11px;letter-spacing:-0.28px;left:536px;top:561.70px;height:25.00px;line-height:25.00px">ФОП всього:</div>
<div style="position:absolute;white-space:nowrap;color:#6a6a6a;font-size:9px;letter-spacing:-0.3px;transform:scaleX(0.91);transform-origin:100% 50%;text-align:right;left:708.20px;width:80px;top:561.50px;height:25.00px;line-height:25.00px">0</div>
<div style="position:absolute;white-space:nowrap;color:#707070;font-size:11px;letter-spacing:-0.28px;left:536px;top:586.70px;height:24.50px;line-height:24.50px">ФОП з бонусами:</div>
<div style="position:absolute;white-space:nowrap;color:#6a6a6a;font-size:9px;letter-spacing:-0.3px;transform:scaleX(0.91);transform-origin:100% 50%;text-align:right;left:708.20px;width:80px;top:586.50px;height:24.50px;line-height:24.50px">1 302,300</div>
<div style="position:absolute;white-space:nowrap;color:#6a6a6a;font-size:9px;letter-spacing:-0.3px;transform:scaleX(0.91);transform-origin:100% 50%;text-align:right;left:767.37px;width:80px;top:586.50px;height:24.50px;line-height:24.50px">44,550</div>
<div style="position:absolute;white-space:nowrap;color:#6a6a6a;font-size:9px;letter-spacing:-0.3px;transform:scaleX(0.91);transform-origin:100% 50%;text-align:right;left:826.54px;width:80px;top:586.50px;height:24.50px;line-height:24.50px">471,000</div>
<div style="position:absolute;white-space:nowrap;color:#6a6a6a;font-size:9px;letter-spacing:-0.3px;transform:scaleX(0.91);transform-origin:100% 50%;text-align:right;left:856.12px;width:80px;top:586.50px;height:24.50px;line-height:24.50px">135,600</div>
<div class="abs" style="left:536.00px;top:622.00px;width:1169.70px;height:24.50px;background:#f2f2f2;"></div>
<div class="abs" style="left:720.65px;top:622.00px;width:1.50px;height:24.50px;background:#fff;"></div>
<div class="abs" style="left:788.15px;top:622.00px;width:1.50px;height:24.50px;background:#fff;"></div>
<div class="abs" style="left:817.74px;top:622.00px;width:1.50px;height:24.50px;background:#fff;"></div>
<div class="abs" style="left:847.32px;top:622.00px;width:1.50px;height:24.50px;background:#fff;"></div>
<div class="abs" style="left:876.90px;top:622.00px;width:1.50px;height:24.50px;background:#fff;"></div>
<div class="abs" style="left:906.49px;top:622.00px;width:1.50px;height:24.50px;background:#fff;"></div>
<div class="abs" style="left:936.07px;top:622.00px;width:1.50px;height:24.50px;background:#fff;"></div>
<div class="abs" style="left:965.66px;top:622.00px;width:1.50px;height:24.50px;background:#fff;"></div>
<div class="abs" style="left:995.25px;top:622.00px;width:1.50px;height:24.50px;background:#fff;"></div>
<div class="abs" style="left:1024.83px;top:622.00px;width:1.50px;height:24.50px;background:#fff;"></div>
<div class="abs" style="left:1054.41px;top:622.00px;width:1.50px;height:24.50px;background:#fff;"></div>
<div class="abs" style="left:1084.00px;top:622.00px;width:1.50px;height:24.50px;background:#fff;"></div>
<div class="abs" style="left:1113.59px;top:622.00px;width:1.50px;height:24.50px;background:#fff;"></div>
<div class="abs" style="left:1143.17px;top:622.00px;width:1.50px;height:24.50px;background:#fff;"></div>
<div class="abs" style="left:1172.76px;top:622.00px;width:1.50px;height:24.50px;background:#fff;"></div>
<div class="abs" style="left:1202.34px;top:622.00px;width:1.50px;height:24.50px;background:#fff;"></div>
<div class="abs" style="left:1231.93px;top:622.00px;width:1.50px;height:24.50px;background:#fff;"></div>
<div class="abs" style="left:1261.51px;top:622.00px;width:1.50px;height:24.50px;background:#fff;"></div>
<div class="abs" style="left:1291.10px;top:622.00px;width:1.50px;height:24.50px;background:#fff;"></div>
<div class="abs" style="left:1320.68px;top:622.00px;width:1.50px;height:24.50px;background:#fff;"></div>
<div class="abs" style="left:1350.27px;top:622.00px;width:1.50px;height:24.50px;background:#fff;"></div>
<div class="abs" style="left:1379.85px;top:622.00px;width:1.50px;height:24.50px;background:#fff;"></div>
<div class="abs" style="left:1409.43px;top:622.00px;width:1.50px;height:24.50px;background:#fff;"></div>
<div class="abs" style="left:1439.02px;top:622.00px;width:1.50px;height:24.50px;background:#fff;"></div>
<div class="abs" style="left:1468.61px;top:622.00px;width:1.50px;height:24.50px;background:#fff;"></div>
<div class="abs" style="left:1498.19px;top:622.00px;width:1.50px;height:24.50px;background:#fff;"></div>
<div class="abs" style="left:1527.78px;top:622.00px;width:1.50px;height:24.50px;background:#fff;"></div>
<div class="abs" style="left:1557.36px;top:622.00px;width:1.50px;height:24.50px;background:#fff;"></div>
<div class="abs" style="left:1586.95px;top:622.00px;width:1.50px;height:24.50px;background:#fff;"></div>
<div class="abs" style="left:1616.53px;top:622.00px;width:1.50px;height:24.50px;background:#fff;"></div>
<div class="abs" style="left:1646.12px;top:622.00px;width:1.50px;height:24.50px;background:#fff;"></div>
<div class="abs" style="left:1675.70px;top:622.00px;width:1.50px;height:24.50px;background:#fff;"></div>
<div class="abs" style="left:536.00px;top:646.50px;width:1169.70px;height:26.10px;background:#f2f2f2;"></div>
<div class="abs" style="left:720.65px;top:646.50px;width:1.50px;height:26.10px;background:#fff;"></div>
<div class="abs" style="left:788.15px;top:646.50px;width:1.50px;height:26.10px;background:#fff;"></div>
<div class="abs" style="left:817.74px;top:646.50px;width:1.50px;height:26.10px;background:#fff;"></div>
<div class="abs" style="left:847.32px;top:646.50px;width:1.50px;height:26.10px;background:#fff;"></div>
<div class="abs" style="left:876.90px;top:646.50px;width:1.50px;height:26.10px;background:#fff;"></div>
<div class="abs" style="left:906.49px;top:646.50px;width:1.50px;height:26.10px;background:#fff;"></div>
<div class="abs" style="left:936.07px;top:646.50px;width:1.50px;height:26.10px;background:#fff;"></div>
<div class="abs" style="left:965.66px;top:646.50px;width:1.50px;height:26.10px;background:#fff;"></div>
<div class="abs" style="left:995.25px;top:646.50px;width:1.50px;height:26.10px;background:#fff;"></div>
<div class="abs" style="left:1024.83px;top:646.50px;width:1.50px;height:26.10px;background:#fff;"></div>
<div class="abs" style="left:1054.41px;top:646.50px;width:1.50px;height:26.10px;background:#fff;"></div>
<div class="abs" style="left:1084.00px;top:646.50px;width:1.50px;height:26.10px;background:#fff;"></div>
<div class="abs" style="left:1113.59px;top:646.50px;width:1.50px;height:26.10px;background:#fff;"></div>
<div class="abs" style="left:1143.17px;top:646.50px;width:1.50px;height:26.10px;background:#fff;"></div>
<div class="abs" style="left:1172.76px;top:646.50px;width:1.50px;height:26.10px;background:#fff;"></div>
<div class="abs" style="left:1202.34px;top:646.50px;width:1.50px;height:26.10px;background:#fff;"></div>
<div class="abs" style="left:1231.93px;top:646.50px;width:1.50px;height:26.10px;background:#fff;"></div>
<div class="abs" style="left:1261.51px;top:646.50px;width:1.50px;height:26.10px;background:#fff;"></div>
<div class="abs" style="left:1291.10px;top:646.50px;width:1.50px;height:26.10px;background:#fff;"></div>
<div class="abs" style="left:1320.68px;top:646.50px;width:1.50px;height:26.10px;background:#fff;"></div>
<div class="abs" style="left:1350.27px;top:646.50px;width:1.50px;height:26.10px;background:#fff;"></div>
<div class="abs" style="left:1379.85px;top:646.50px;width:1.50px;height:26.10px;background:#fff;"></div>
<div class="abs" style="left:1409.43px;top:646.50px;width:1.50px;height:26.10px;background:#fff;"></div>
<div class="abs" style="left:1439.02px;top:646.50px;width:1.50px;height:26.10px;background:#fff;"></div>
<div class="abs" style="left:1468.61px;top:646.50px;width:1.50px;height:26.10px;background:#fff;"></div>
<div class="abs" style="left:1498.19px;top:646.50px;width:1.50px;height:26.10px;background:#fff;"></div>
<div class="abs" style="left:1527.78px;top:646.50px;width:1.50px;height:26.10px;background:#fff;"></div>
<div class="abs" style="left:1557.36px;top:646.50px;width:1.50px;height:26.10px;background:#fff;"></div>
<div class="abs" style="left:1586.95px;top:646.50px;width:1.50px;height:26.10px;background:#fff;"></div>
<div class="abs" style="left:1616.53px;top:646.50px;width:1.50px;height:26.10px;background:#fff;"></div>
<div class="abs" style="left:1646.12px;top:646.50px;width:1.50px;height:26.10px;background:#fff;"></div>
<div class="abs" style="left:1675.70px;top:646.50px;width:1.50px;height:26.10px;background:#fff;"></div>
<div class="abs" style="left:536.00px;top:672.60px;width:1169.70px;height:24.40px;background:#d6d6d6;"></div>
<div class="abs" style="left:720.65px;top:672.60px;width:1.50px;height:24.40px;background:#fff;"></div>
<div class="abs" style="left:788.15px;top:672.60px;width:1.50px;height:24.40px;background:#fff;"></div>
<div class="abs" style="left:817.74px;top:672.60px;width:1.50px;height:24.40px;background:#fff;"></div>
<div class="abs" style="left:847.32px;top:672.60px;width:1.50px;height:24.40px;background:#fff;"></div>
<div class="abs" style="left:876.90px;top:672.60px;width:1.50px;height:24.40px;background:#fff;"></div>
<div class="abs" style="left:906.49px;top:672.60px;width:1.50px;height:24.40px;background:#fff;"></div>
<div class="abs" style="left:936.07px;top:672.60px;width:1.50px;height:24.40px;background:#fff;"></div>
<div class="abs" style="left:965.66px;top:672.60px;width:1.50px;height:24.40px;background:#fff;"></div>
<div class="abs" style="left:995.25px;top:672.60px;width:1.50px;height:24.40px;background:#fff;"></div>
<div class="abs" style="left:1024.83px;top:672.60px;width:1.50px;height:24.40px;background:#fff;"></div>
<div class="abs" style="left:1054.41px;top:672.60px;width:1.50px;height:24.40px;background:#fff;"></div>
<div class="abs" style="left:1084.00px;top:672.60px;width:1.50px;height:24.40px;background:#fff;"></div>
<div class="abs" style="left:1113.59px;top:672.60px;width:1.50px;height:24.40px;background:#fff;"></div>
<div class="abs" style="left:1143.17px;top:672.60px;width:1.50px;height:24.40px;background:#fff;"></div>
<div class="abs" style="left:1172.76px;top:672.60px;width:1.50px;height:24.40px;background:#fff;"></div>
<div class="abs" style="left:1202.34px;top:672.60px;width:1.50px;height:24.40px;background:#fff;"></div>
<div class="abs" style="left:1231.93px;top:672.60px;width:1.50px;height:24.40px;background:#fff;"></div>
<div class="abs" style="left:1261.51px;top:672.60px;width:1.50px;height:24.40px;background:#fff;"></div>
<div class="abs" style="left:1291.10px;top:672.60px;width:1.50px;height:24.40px;background:#fff;"></div>
<div class="abs" style="left:1320.68px;top:672.60px;width:1.50px;height:24.40px;background:#fff;"></div>
<div class="abs" style="left:1350.27px;top:672.60px;width:1.50px;height:24.40px;background:#fff;"></div>
<div class="abs" style="left:1379.85px;top:672.60px;width:1.50px;height:24.40px;background:#fff;"></div>
<div class="abs" style="left:1409.43px;top:672.60px;width:1.50px;height:24.40px;background:#fff;"></div>
<div class="abs" style="left:1439.02px;top:672.60px;width:1.50px;height:24.40px;background:#fff;"></div>
<div class="abs" style="left:1468.61px;top:672.60px;width:1.50px;height:24.40px;background:#fff;"></div>
<div class="abs" style="left:1498.19px;top:672.60px;width:1.50px;height:24.40px;background:#fff;"></div>
<div class="abs" style="left:1527.78px;top:672.60px;width:1.50px;height:24.40px;background:#fff;"></div>
<div class="abs" style="left:1557.36px;top:672.60px;width:1.50px;height:24.40px;background:#fff;"></div>
<div class="abs" style="left:1586.95px;top:672.60px;width:1.50px;height:24.40px;background:#fff;"></div>
<div class="abs" style="left:1616.53px;top:672.60px;width:1.50px;height:24.40px;background:#fff;"></div>
<div class="abs" style="left:1646.12px;top:672.60px;width:1.50px;height:24.40px;background:#fff;"></div>
<div class="abs" style="left:1675.70px;top:672.60px;width:1.50px;height:24.40px;background:#fff;"></div>
<div class="abs" style="left:536.00px;top:646.00px;width:1169.70px;height:1.30px;background:#fff;"></div>
<div style="position:absolute;white-space:nowrap;color:#707070;font-size:11px;letter-spacing:-0.28px;left:536px;top:621.20px;height:24.50px;line-height:24.50px">Дохід аля карт:</div>
<div style="position:absolute;white-space:nowrap;color:#6a6a6a;font-size:9px;letter-spacing:-0.3px;transform:scaleX(0.91);transform-origin:100% 50%;text-align:right;left:708.20px;width:80px;top:621.00px;height:24.50px;line-height:24.50px">26 046,000</div>
<div style="position:absolute;white-space:nowrap;color:#6a6a6a;font-size:9px;letter-spacing:-0.3px;transform:scaleX(0.91);transform-origin:100% 50%;text-align:right;left:767.37px;width:80px;top:621.00px;height:24.50px;line-height:24.50px">891,000</div>
<div style="position:absolute;white-space:nowrap;color:#6a6a6a;font-size:9px;letter-spacing:-0.3px;transform:scaleX(0.91);transform-origin:100% 50%;text-align:right;left:866.54px;width:40px;top:625.50px;line-height:8px">9 420,0<br>00</div>
<div style="position:absolute;white-space:nowrap;color:#6a6a6a;font-size:9px;letter-spacing:-0.3px;transform:scaleX(0.91);transform-origin:100% 50%;text-align:right;left:896.12px;width:40px;top:625.50px;line-height:8px">2 712,0<br>00</div>
<div style="position:absolute;white-space:nowrap;color:#707070;font-size:11px;letter-spacing:-0.28px;left:536px;top:645.70px;height:25.50px;line-height:25.50px">Дохід сніданок:</div>
<div style="position:absolute;white-space:nowrap;color:#6a6a6a;font-size:9px;letter-spacing:-0.3px;transform:scaleX(0.91);transform-origin:100% 50%;text-align:right;left:708.20px;width:80px;top:645.50px;height:25.50px;line-height:25.50px">0,000</div>
<div style="position:absolute;white-space:nowrap;color:#707070;font-size:11px;letter-spacing:-0.28px;left:536px;top:671.80px;height:24.40px;line-height:24.40px">Дохід всього:</div>
<div style="position:absolute;white-space:nowrap;color:#6a6a6a;font-size:9px;letter-spacing:-0.3px;transform:scaleX(0.91);transform-origin:100% 50%;text-align:right;left:708.20px;width:80px;top:671.60px;height:24.40px;line-height:24.40px">26 046,000</div>
<div style="position:absolute;white-space:nowrap;color:#6a6a6a;font-size:9px;letter-spacing:-0.3px;transform:scaleX(0.91);transform-origin:100% 50%;text-align:right;left:767.37px;width:80px;top:671.60px;height:24.40px;line-height:24.40px">891,000</div>
<div style="position:absolute;white-space:nowrap;color:#6a6a6a;font-size:9px;letter-spacing:-0.3px;transform:scaleX(0.91);transform-origin:100% 50%;text-align:right;left:866.54px;width:40px;top:676.10px;line-height:8px">9 420,0<br>00</div>
<div style="position:absolute;white-space:nowrap;color:#6a6a6a;font-size:9px;letter-spacing:-0.3px;transform:scaleX(0.91);transform-origin:100% 50%;text-align:right;left:896.12px;width:40px;top:676.10px;line-height:8px">2 712,0<br>00</div>
<div class="abs" style="left:536.00px;top:706.50px;width:1169.70px;height:24.50px;background:#d6d6d6;"></div>
<div class="abs" style="left:720.65px;top:706.50px;width:1.50px;height:24.50px;background:#fff;"></div>
<div class="abs" style="left:788.15px;top:706.50px;width:1.50px;height:24.50px;background:#fff;"></div>
<div class="abs" style="left:817.74px;top:706.50px;width:1.50px;height:24.50px;background:#fff;"></div>
<div class="abs" style="left:847.32px;top:706.50px;width:1.50px;height:24.50px;background:#fff;"></div>
<div class="abs" style="left:876.90px;top:706.50px;width:1.50px;height:24.50px;background:#fff;"></div>
<div class="abs" style="left:906.49px;top:706.50px;width:1.50px;height:24.50px;background:#fff;"></div>
<div class="abs" style="left:936.07px;top:706.50px;width:1.50px;height:24.50px;background:#fff;"></div>
<div class="abs" style="left:965.66px;top:706.50px;width:1.50px;height:24.50px;background:#fff;"></div>
<div class="abs" style="left:995.25px;top:706.50px;width:1.50px;height:24.50px;background:#fff;"></div>
<div class="abs" style="left:1024.83px;top:706.50px;width:1.50px;height:24.50px;background:#fff;"></div>
<div class="abs" style="left:1054.41px;top:706.50px;width:1.50px;height:24.50px;background:#fff;"></div>
<div class="abs" style="left:1084.00px;top:706.50px;width:1.50px;height:24.50px;background:#fff;"></div>
<div class="abs" style="left:1113.59px;top:706.50px;width:1.50px;height:24.50px;background:#fff;"></div>
<div class="abs" style="left:1143.17px;top:706.50px;width:1.50px;height:24.50px;background:#fff;"></div>
<div class="abs" style="left:1172.76px;top:706.50px;width:1.50px;height:24.50px;background:#fff;"></div>
<div class="abs" style="left:1202.34px;top:706.50px;width:1.50px;height:24.50px;background:#fff;"></div>
<div class="abs" style="left:1231.93px;top:706.50px;width:1.50px;height:24.50px;background:#fff;"></div>
<div class="abs" style="left:1261.51px;top:706.50px;width:1.50px;height:24.50px;background:#fff;"></div>
<div class="abs" style="left:1291.10px;top:706.50px;width:1.50px;height:24.50px;background:#fff;"></div>
<div class="abs" style="left:1320.68px;top:706.50px;width:1.50px;height:24.50px;background:#fff;"></div>
<div class="abs" style="left:1350.27px;top:706.50px;width:1.50px;height:24.50px;background:#fff;"></div>
<div class="abs" style="left:1379.85px;top:706.50px;width:1.50px;height:24.50px;background:#fff;"></div>
<div class="abs" style="left:1409.43px;top:706.50px;width:1.50px;height:24.50px;background:#fff;"></div>
<div class="abs" style="left:1439.02px;top:706.50px;width:1.50px;height:24.50px;background:#fff;"></div>
<div class="abs" style="left:1468.61px;top:706.50px;width:1.50px;height:24.50px;background:#fff;"></div>
<div class="abs" style="left:1498.19px;top:706.50px;width:1.50px;height:24.50px;background:#fff;"></div>
<div class="abs" style="left:1527.78px;top:706.50px;width:1.50px;height:24.50px;background:#fff;"></div>
<div class="abs" style="left:1557.36px;top:706.50px;width:1.50px;height:24.50px;background:#fff;"></div>
<div class="abs" style="left:1586.95px;top:706.50px;width:1.50px;height:24.50px;background:#fff;"></div>
<div class="abs" style="left:1616.53px;top:706.50px;width:1.50px;height:24.50px;background:#fff;"></div>
<div class="abs" style="left:1646.12px;top:706.50px;width:1.50px;height:24.50px;background:#fff;"></div>
<div class="abs" style="left:1675.70px;top:706.50px;width:1.50px;height:24.50px;background:#fff;"></div>
<div class="abs" style="left:536.00px;top:731.00px;width:1169.70px;height:25.00px;background:#d6d6d6;"></div>
<div class="abs" style="left:720.65px;top:731.00px;width:1.50px;height:25.00px;background:#fff;"></div>
<div class="abs" style="left:788.15px;top:731.00px;width:1.50px;height:25.00px;background:#fff;"></div>
<div class="abs" style="left:817.74px;top:731.00px;width:1.50px;height:25.00px;background:#fff;"></div>
<div class="abs" style="left:847.32px;top:731.00px;width:1.50px;height:25.00px;background:#fff;"></div>
<div class="abs" style="left:876.90px;top:731.00px;width:1.50px;height:25.00px;background:#fff;"></div>
<div class="abs" style="left:906.49px;top:731.00px;width:1.50px;height:25.00px;background:#fff;"></div>
<div class="abs" style="left:936.07px;top:731.00px;width:1.50px;height:25.00px;background:#fff;"></div>
<div class="abs" style="left:965.66px;top:731.00px;width:1.50px;height:25.00px;background:#fff;"></div>
<div class="abs" style="left:995.25px;top:731.00px;width:1.50px;height:25.00px;background:#fff;"></div>
<div class="abs" style="left:1024.83px;top:731.00px;width:1.50px;height:25.00px;background:#fff;"></div>
<div class="abs" style="left:1054.41px;top:731.00px;width:1.50px;height:25.00px;background:#fff;"></div>
<div class="abs" style="left:1084.00px;top:731.00px;width:1.50px;height:25.00px;background:#fff;"></div>
<div class="abs" style="left:1113.59px;top:731.00px;width:1.50px;height:25.00px;background:#fff;"></div>
<div class="abs" style="left:1143.17px;top:731.00px;width:1.50px;height:25.00px;background:#fff;"></div>
<div class="abs" style="left:1172.76px;top:731.00px;width:1.50px;height:25.00px;background:#fff;"></div>
<div class="abs" style="left:1202.34px;top:731.00px;width:1.50px;height:25.00px;background:#fff;"></div>
<div class="abs" style="left:1231.93px;top:731.00px;width:1.50px;height:25.00px;background:#fff;"></div>
<div class="abs" style="left:1261.51px;top:731.00px;width:1.50px;height:25.00px;background:#fff;"></div>
<div class="abs" style="left:1291.10px;top:731.00px;width:1.50px;height:25.00px;background:#fff;"></div>
<div class="abs" style="left:1320.68px;top:731.00px;width:1.50px;height:25.00px;background:#fff;"></div>
<div class="abs" style="left:1350.27px;top:731.00px;width:1.50px;height:25.00px;background:#fff;"></div>
<div class="abs" style="left:1379.85px;top:731.00px;width:1.50px;height:25.00px;background:#fff;"></div>
<div class="abs" style="left:1409.43px;top:731.00px;width:1.50px;height:25.00px;background:#fff;"></div>
<div class="abs" style="left:1439.02px;top:731.00px;width:1.50px;height:25.00px;background:#fff;"></div>
<div class="abs" style="left:1468.61px;top:731.00px;width:1.50px;height:25.00px;background:#fff;"></div>
<div class="abs" style="left:1498.19px;top:731.00px;width:1.50px;height:25.00px;background:#fff;"></div>
<div class="abs" style="left:1527.78px;top:731.00px;width:1.50px;height:25.00px;background:#fff;"></div>
<div class="abs" style="left:1557.36px;top:731.00px;width:1.50px;height:25.00px;background:#fff;"></div>
<div class="abs" style="left:1586.95px;top:731.00px;width:1.50px;height:25.00px;background:#fff;"></div>
<div class="abs" style="left:1616.53px;top:731.00px;width:1.50px;height:25.00px;background:#fff;"></div>
<div class="abs" style="left:1646.12px;top:731.00px;width:1.50px;height:25.00px;background:#fff;"></div>
<div class="abs" style="left:1675.70px;top:731.00px;width:1.50px;height:25.00px;background:#fff;"></div>
<div class="abs" style="left:536.00px;top:730.50px;width:1169.70px;height:1.30px;background:#fff;"></div>
<div style="position:absolute;white-space:nowrap;color:#707070;font-size:11px;letter-spacing:-0.28px;left:536px;top:705.70px;height:24.50px;line-height:24.50px">Лейборкост нетто:</div>
<div style="position:absolute;white-space:nowrap;color:#6a6a6a;font-size:9px;letter-spacing:-0.3px;transform:scaleX(0.91);transform-origin:100% 50%;text-align:right;color:#1a9ae6;left:708.20px;width:80px;top:705.50px;height:24.50px;line-height:24.50px">5,000</div>
<div style="position:absolute;white-space:nowrap;color:#6a6a6a;font-size:9px;letter-spacing:-0.3px;transform:scaleX(0.91);transform-origin:100% 50%;text-align:right;left:767.37px;width:80px;top:705.50px;height:24.50px;line-height:24.50px">5,000</div>
<div style="position:absolute;white-space:nowrap;color:#6a6a6a;font-size:9px;letter-spacing:-0.3px;transform:scaleX(0.91);transform-origin:100% 50%;text-align:right;left:826.54px;width:80px;top:705.50px;height:24.50px;line-height:24.50px">5,000</div>
<div style="position:absolute;white-space:nowrap;color:#6a6a6a;font-size:9px;letter-spacing:-0.3px;transform:scaleX(0.91);transform-origin:100% 50%;text-align:right;left:856.12px;width:80px;top:705.50px;height:24.50px;line-height:24.50px">5,000</div>
<div style="position:absolute;white-space:nowrap;color:#707070;font-size:11px;letter-spacing:-0.28px;left:536px;top:730.20px;height:25.00px;line-height:25.00px">Лейборкост брутто:</div>
<div style="position:absolute;white-space:nowrap;color:#6a6a6a;font-size:9px;letter-spacing:-0.3px;transform:scaleX(0.91);transform-origin:100% 50%;text-align:right;color:#1a9ae6;left:708.20px;width:80px;top:730.00px;height:25.00px;line-height:25.00px">6,000</div>
<div style="position:absolute;white-space:nowrap;color:#6a6a6a;font-size:9px;letter-spacing:-0.3px;transform:scaleX(0.91);transform-origin:100% 50%;text-align:right;left:767.37px;width:80px;top:730.00px;height:25.00px;line-height:25.00px">6,000</div>
<div style="position:absolute;white-space:nowrap;color:#6a6a6a;font-size:9px;letter-spacing:-0.3px;transform:scaleX(0.91);transform-origin:100% 50%;text-align:right;left:826.54px;width:80px;top:730.00px;height:25.00px;line-height:25.00px">6,000</div>
<div style="position:absolute;white-space:nowrap;color:#6a6a6a;font-size:9px;letter-spacing:-0.3px;transform:scaleX(0.91);transform-origin:100% 50%;text-align:right;left:856.12px;width:80px;top:730.00px;height:25.00px;line-height:25.00px">6,000</div>
<div class="abs" style="left:1705.80px;top:402.00px;width:1.50px;height:8.00px;background:#000;"></div>
<div class="abs" style="left:1705.80px;top:612.00px;width:1.50px;height:10.00px;background:#000;"></div>
<div class="abs" style="left:1705.80px;top:697.00px;width:1.50px;height:9.50px;background:#000;"></div>
<div class="abs" style="left:1705.80px;top:511.00px;width:1.50px;height:25.00px;background:#000;"></div>
</div></div>
</body></html>
